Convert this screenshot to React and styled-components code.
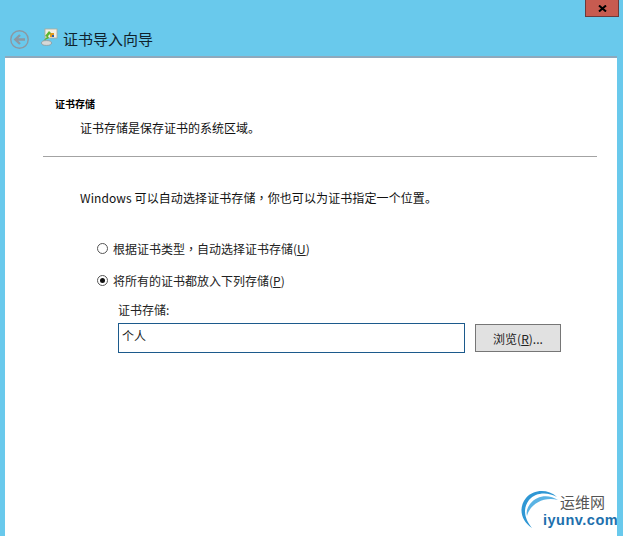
import React from 'react';
import styled, { createGlobalStyle } from 'styled-components';

const Global = createGlobalStyle`
  html, body { margin: 0; padding: 0; overflow: hidden; }
  body { font-family: "Liberation Sans", "Noto Sans CJK SC", sans-serif; }
`;
const cjk = `"Noto Sans CJK SC", "Liberation Sans", sans-serif`;
const Win = styled.div`
  width: 623px; height: 536px; background: #69c9ec; display: flex; flex-direction: column;
  position: relative; overflow: hidden;
`;
const TopBar = styled.div`
  height: 17px; display: flex; justify-content: flex-end; padding-right: 4px; flex: none;
`;
const Close = styled.div`
  width: 32px; height: 16px; background: #c75b50; border: solid #6b3a3c; border-width: 0 1px 1px 1px;
  display: flex; align-items: center; justify-content: center;
`;
const Nav = styled.div`
  height: 39px; flex: none; display: flex; align-items: flex-start; padding: 13px 0 0 10px; box-sizing: border-box;
`;
const WizardIcon = styled.svg`
  margin: -2px 0 0 11px; flex: none;
`;
const Title = styled.div`
  font-family: ${cjk}; font-size: 15px; line-height: 20px; color: #10222c; margin-left: 5px; margin-top: -1px;
`;
const Panel = styled.div`
  flex: 1; margin: 0 6px 0 5px; background: #fff; border-top: 2px solid #8ea9bd; box-sizing: border-box;
  padding: 39px 20px 0 38px; position: relative; color: #111; font-family: ${cjk};
`;
const Heading = styled.div`
  font-size: 10px; line-height: 14px; font-weight: 700; margin-left: 12px; color: #000;
`;
const Sub = styled.div`
  font-size: 12px; line-height: 16px; margin: 9px 0 0 37px;
`;
const Rule = styled.div`
  height: 1px; background: #a3a3a3; margin-top: 20px;
`;
const Lead = styled.div`
  font-size: 12px; line-height: 18px; margin: 32px 0 0 37px; letter-spacing: 0.1px;
`;
const Punct = styled.span`
  font-family: "Noto Sans CJK TC", sans-serif;
`;
const Options = styled.div`
  margin: 33px 0 0 54px; display: flex; flex-direction: column; gap: 15px;
`;
const Option = styled.div`
  display: flex; align-items: center; gap: 5px; height: 17px; font-size: 12px; color: #222;
`;
const OptionText = styled.span`
  white-space: nowrap;
`;
const Radio = styled.span`
  width: 11px; height: 11px; border-radius: 50%; border: 1px solid #555; box-sizing: border-box; background: #fff;
  display: flex; align-items: center; justify-content: center; flex: none;
  &::after { content: ''; display: ${p => (p.$on ? 'block' : 'none')}; width: 5px; height: 5px; border-radius: 50%; background: #111; }
`;
const Store = styled.div`
  margin: 13px 0 0 75px;
`;
const StoreLabel = styled.div`
  font-size: 12px; line-height: 16px; color: #222;
`;
const StoreRow = styled.div`
  display: flex; align-items: center; gap: 10px; margin-top: 5px; width: 443px;
`;
const Input = styled.div`
  width: 347px; height: 30px; box-sizing: border-box; border: 1px solid #1c5a8c; padding: 3px 3px;
  font-size: 12px; line-height: 17px; color: #222;
`;
const Browse = styled.div`
  width: 86px; height: 28px; box-sizing: border-box; background: #e1e1e1; border: 1px solid #767676;
  display: flex; align-items: center; justify-content: center; font-size: 12px; color: #222;
`;
const Logo = styled.div`
  position: absolute; right: 0; bottom: 0; width: 97px; height: 50px; overflow: hidden;
`;
const LogoMark = styled.svg`
  position: absolute; left: 0; top: 0;
`;
const LogoCn = styled.div`
  position: absolute; left: 40px; top: 7px; font-size: 15px; line-height: 18px; color: #555;
`;
const LogoEn = styled.div`
  position: absolute; left: 23px; top: 25px; font-family: "Liberation Sans", sans-serif; font-weight: 700;
  font-size: 14.5px; line-height: 18px; color: #1d70ad; letter-spacing: 0.5px; white-space: nowrap;
`;
const U = styled.span`text-decoration: underline;`;

export default function App() {
  return (
    <Win>
      <Global />
      <TopBar>
        <Close>
          <svg width="9" height="7" viewBox="0 0 9 7"><path d="M1 .5 8 6.5M8 .5 1 6.5" stroke="#000" strokeWidth="2" fill="none" /></svg>
        </Close>
      </TopBar>
      <Nav>
        <svg width="19" height="19" viewBox="0 0 19 19" style={{ flex: 'none' }}>
          <circle cx="9.5" cy="9.5" r="8.7" fill="none" stroke="#8c98a2" strokeWidth="1.4" />
          <path d="M15 9.5H6M10 5 5.3 9.5l4.7 4.5" fill="none" stroke="#8c98a2" strokeWidth="2.4" />
        </svg>
        <WizardIcon width="18" height="19" viewBox="0 0 18 19">
          <rect x="5" y="1" width="12" height="9" fill="#f2efe4" stroke="#b0a994" strokeWidth="0.8" />
          <rect x="10" y="5" width="4" height="4" fill="#e09a20" />
          <rect x="12" y="7" width="2" height="2" fill="#2a5db0" />
          <path d="M9 3 5 8l2 1-4 4 6-3-1-2 3-3z" fill="#5cb531" />
          <ellipse cx="6.5" cy="15" rx="5" ry="2.4" fill="#d5d8d8" stroke="#8b8f90" strokeWidth="0.7" />
        </WizardIcon>
        <Title>证书导入向导</Title>
      </Nav>
      <Panel>
        <Heading>证书存储</Heading>
        <Sub>证书存储是保存证书的系统区域。</Sub>
        <Rule />
        <Lead>Windows 可以自动选择证书存储<Punct>，</Punct>你也可以为证书指定一个位置。</Lead>
        <Options>
          <Option><Radio /><OptionText>根据证书类型<Punct>，</Punct>自动选择证书存储(<U>U</U>)</OptionText></Option>
          <Option><Radio $on /><OptionText>将所有的证书都放入下列存储(<U>P</U>)</OptionText></Option>
        </Options>
        <Store>
          <StoreLabel>证书存储:</StoreLabel>
          <StoreRow>
            <Input>个人</Input>
            <Browse>浏览(<U>R</U>)...</Browse>
          </StoreRow>
        </Store>
        <Logo>
          <LogoMark width="42" height="46" viewBox="0 0 42 46">
            <path d="M37 11C28 3 14 3 6 12-2 22 1 35 12 42 5 34 2 23 9 14 16 6 28 6 37 11z" fill="#2f97d4" />
            <path d="M38 14C29 8 17 9 10 18 7 22 6 26 7 30 9 20 22 10 38 14z" fill="#5ab3e4" />
          </LogoMark>
          <LogoCn>运维网</LogoCn>
          <LogoEn>iyunv.com</LogoEn>
        </Logo>
      </Panel>
    </Win>
  );
}
